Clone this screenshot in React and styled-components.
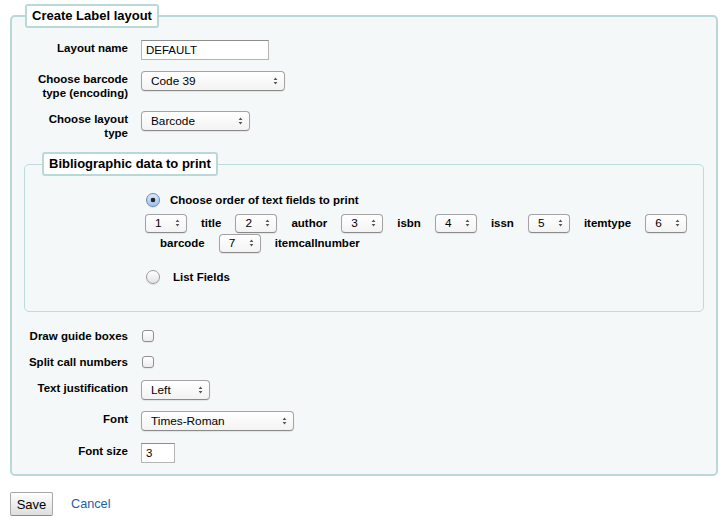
import styled, { createGlobalStyle } from "styled-components";

const GlobalStyle = createGlobalStyle`
  body {
    margin: 0;
    background: #ffffff;
    color: #000000;
    font-family: "Liberation Sans", Arial, Helvetica, sans-serif;
  }
`;

const Page = styled.form`
  padding: 4px 5px 0 10px;
`;

const Fieldset = styled.fieldset`
  margin: 0;
  padding: 12px 0 11px;
  border: 2px solid #b9d8d9;
  border-radius: 5px;
  background: #f4f8f9;
  min-width: 0;
`;

const InnerFieldset = styled.fieldset`
  margin: 12px 12px 0;
  padding: 17px 0 27px 120px;
  border: 1px solid #bcdcdd;
  border-radius: 5px;
  background: #f4f8f9;
  min-width: 0;
`;

const Legend = styled.legend`
  margin-left: ${p => p.$offset}px;
  padding: 0 5px;
  height: 20px;
  line-height: 20px;
  border: 2px solid #b9d8d9;
  border-radius: 3px;
  background: #ffffff;
  font-size: 13px;
  font-weight: bold;
`;

const Row = styled.div`
  display: flex;
  align-items: flex-start;
  margin-top: ${p => p.$gap ?? 11}px;
`;

const Label = styled.label`
  flex: none;
  width: 103px;
  margin: 0 13px 0 13px;
  padding-top: 1px;
  text-align: right;
  font-size: 11.5px;
  font-weight: bold;
  line-height: 14px;
`;

const TextInput = styled.input`
  box-sizing: border-box;
  width: ${p => p.$w}px;
  height: 20px;
  margin: 0;
  padding: 0 4px;
  border: 1px solid #b4b4b4;
  border-top-color: #8e8e8e;
  background: #ffffff;
  font-family: "Liberation Sans", Arial, sans-serif;
  font-size: 11.5px;
  color: #000;
`;

const SelectBox = styled.span`
  position: relative;
  display: inline-flex;
  flex: none;
  width: ${p => p.$w}px;
  height: ${p => p.$h ?? 20}px;
`;

const NativeSelect = styled.select`
  appearance: none;
  -webkit-appearance: none;
  box-sizing: border-box;
  width: 100%;
  height: 100%;
  margin: 0;
  padding: 0 0 0 ${p => p.$pad ?? 9}px;
  border: 1px solid #a3a3a3;
  border-bottom-color: #8a8a8a;
  border-radius: 4px;
  background: linear-gradient(#ffffff, #f3f3f3);
  box-shadow: 0 1px 1px rgba(0, 0, 0, 0.08);
  font-family: "Liberation Sans", Arial, sans-serif;
  font-size: 11.8px;
  color: #000;
`;

const Arrows = styled.svg`
  position: absolute;
  right: 7px;
  top: 50%;
  transform: translateY(-50%);
  pointer-events: none;
`;

const Select = ({ w, h, pad, value, options }) => (
  <SelectBox $w={w} $h={h}>
    <NativeSelect $pad={pad} defaultValue={value}>
      {(options || [value]).map(o => (
        <option key={o}>{o}</option>
      ))}
    </NativeSelect>
    <Arrows width="5" height="9" viewBox="0 0 5 9">
      <path d="M0.6 3.5 L2.5 0.9 L4.4 3.5Z M0.6 5.5 L2.5 8.1 L4.4 5.5Z" fill="#555" />
    </Arrows>
  </SelectBox>
);

const Check = styled.input`
  appearance: none;
  -webkit-appearance: none;
  box-sizing: border-box;
  width: 12px;
  height: 12px;
  margin: 2px 0 0 1px;
  border: 1px solid #8f8f8f;
  border-radius: 3px;
  background: linear-gradient(#ffffff, #ececec);
  box-shadow: 0 1px 0 rgba(0, 0, 0, 0.06);
`;

const Radio = styled.input`
  appearance: none;
  -webkit-appearance: none;
  box-sizing: border-box;
  flex: none;
  width: 14px;
  height: 14px;
  margin: 0 0 0 1px;
  border-radius: 50%;
  border: 1px solid #9c9c9c;
  background: linear-gradient(#ffffff, #e3e3e3);
  box-shadow: 0 1px 1px rgba(0, 0, 0, 0.1);

  &:checked {
    border-color: #6b89b3;
    background: radial-gradient(circle, #1e2530 0 2px, transparent 2.6px),
      linear-gradient(#d9e9f8, #9fc2e8);
  }
`;

const Option = styled.div`
  display: flex;
  align-items: center;
  gap: ${p => p.$gap}px;
  height: 14px;
  margin-top: ${p => p.$top}px;
  font-size: 11.5px;
  font-weight: bold;
`;

const OrderRow = styled.div`
  display: flex;
  align-items: center;
  gap: 14px;
  height: 20px;
  margin-top: ${p => p.$top}px;
  margin-left: ${p => p.$indent ?? 0}px;
  font-size: 11.5px;
  font-weight: bold;
`;

const Actions = styled.div`
  display: flex;
  align-items: center;
  gap: 18px;
  margin-top: 16px;
`;

const Button = styled.button`
  box-sizing: border-box;
  width: 43px;
  height: 24px;
  padding: 0;
  border: 1px solid #a8a8a8;
  border-bottom-color: #8c8c8c;
  border-radius: 2px;
  background: linear-gradient(#ffffff, #dedede);
  font-family: "Liberation Sans", Arial, sans-serif;
  font-size: 13px;
  color: #000;
`;

const LinkText = styled.a`
  color: #1e5fa8;
  font-size: 12.7px;
  text-decoration: none;
`;

const nums = ["1", "2", "3", "4", "5", "6", "7"];

export default function App() {
  return (
    <>
      <GlobalStyle />
      <Page onSubmit={e => e.preventDefault()}>
        <Fieldset>
          <Legend $offset={13}>Create Label layout</Legend>

          <Row $gap={0}>
            <Label>Layout name</Label>
            <TextInput $w={128} defaultValue="DEFAULT" />
          </Row>
          <Row>
            <Label>Choose barcode type (encoding)</Label>
            <Select w={144} value="Code 39" />
          </Row>
          <Row>
            <Label>Choose layout type</Label>
            <Select w={109} value="Barcode" />
          </Row>

          <InnerFieldset>
            <Legend $offset={-103}>Bibliographic data to print</Legend>
            <Option $gap={10} $top={0}>
              <Radio type="radio" name="order" defaultChecked />
              Choose order of text fields to print
            </Option>
            <OrderRow $top={6}>
              <Select w={42} h={19} value="1" options={nums} />
              title
              <Select w={42} h={19} value="2" options={nums} />
              author
              <Select w={42} h={19} value="3" options={nums} />
              isbn
              <Select w={42} h={19} value="4" options={nums} />
              issn
              <Select w={42} h={19} value="5" options={nums} />
              itemtype
              <Select w={42} h={19} value="6" options={nums} />
            </OrderRow>
            <OrderRow $top={0} $indent={15}>
              barcode
              <Select w={42} h={19} value="7" options={nums} />
              itemcallnumber
            </OrderRow>
            <Option $gap={13} $top={17}>
              <Radio type="radio" name="order" />
              List Fields
            </Option>
          </InnerFieldset>

          <Row $gap={16}>
            <Label>Draw guide boxes</Label>
            <Check type="checkbox" />
          </Row>
          <Row>
            <Label>Split call numbers</Label>
            <Check type="checkbox" />
          </Row>
          <Row>
            <Label>Text justification</Label>
            <Select w={69} value="Left" />
          </Row>
          <Row>
            <Label>Font</Label>
            <Select w={153} value="Times-Roman" />
          </Row>
          <Row $gap={12}>
            <Label>Font size</Label>
            <TextInput $w={34} defaultValue="3" />
          </Row>
        </Fieldset>

        <Actions>
          <Button type="submit">Save</Button>
          <LinkText href="#">Cancel</LinkText>
        </Actions>
      </Page>
    </>
  );
}
